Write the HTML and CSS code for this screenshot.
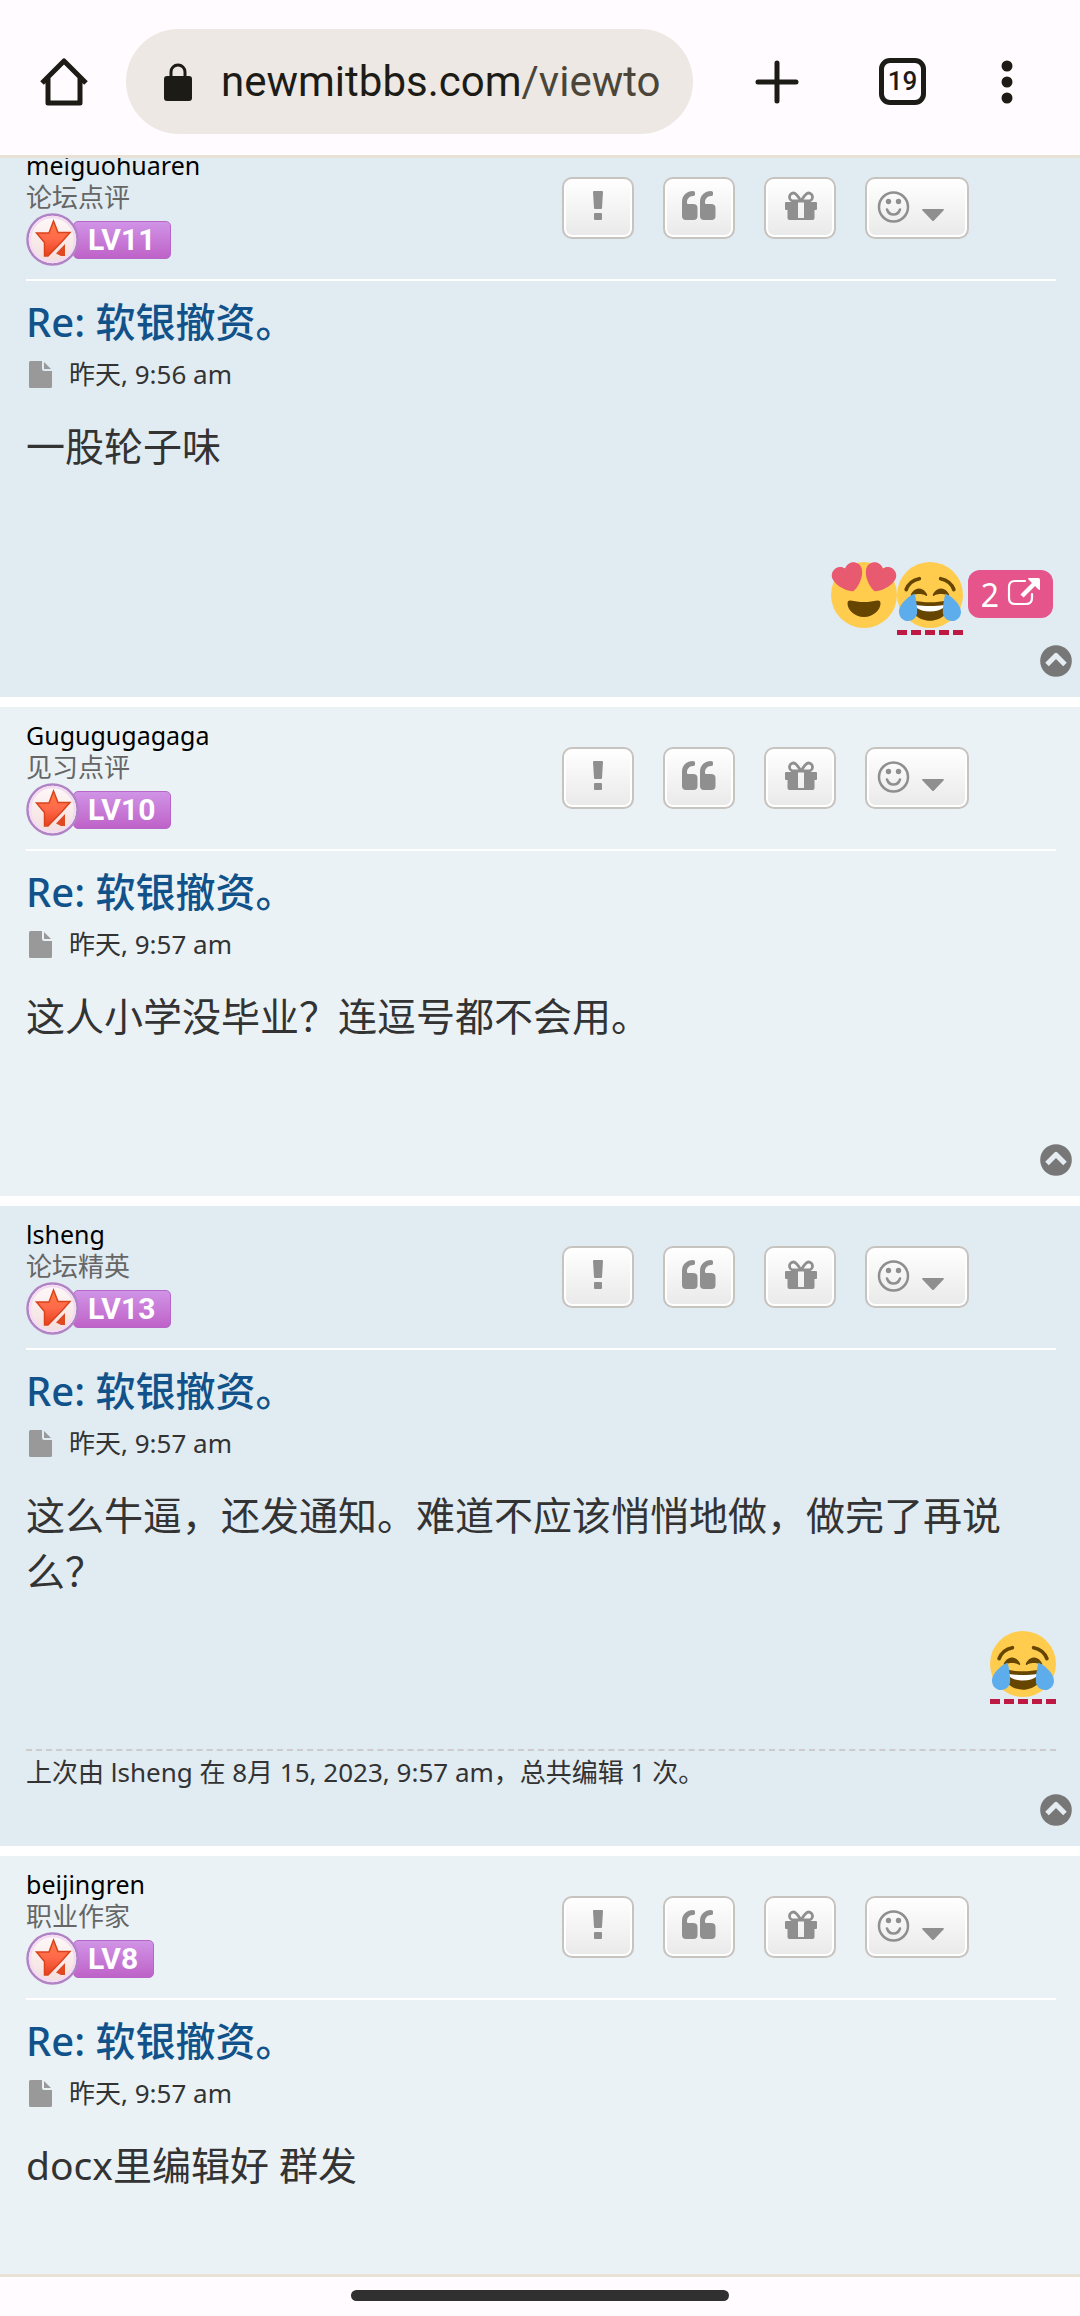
FILE: index.html
```html
<!DOCTYPE html>
<html lang="zh-CN">
<head>
  <meta charset="UTF-8">
  <meta name="viewport" content="width=device-width, initial-scale=1.0">
  <title>软银撤资。</title>
  <link rel="stylesheet" href="styles.css">
</head>
<body>
  <!-- shared icons -->
  <svg class="sprite" aria-hidden="true">
    <defs>
      <linearGradient id="star-fill" x1="0" y1="0" x2="0" y2="1">
        <stop offset="0" stop-color="#ff7a45"/>
        <stop offset=".5" stop-color="#ff6a4a"/>
        <stop offset="1" stop-color="#e8401c"/>
      </linearGradient>
      <linearGradient id="medal-fill" x1="0" y1="0" x2="0" y2="1">
        <stop offset="0" stop-color="#fffafa"/>
        <stop offset="1" stop-color="#f3dcdc"/>
      </linearGradient>
    </defs>
    <symbol id="i-medal" viewBox="0 0 53 53">
      <circle cx="26.5" cy="26.5" r="25" fill="url(#medal-fill)" stroke="#b083c4" stroke-width="2.5"/>
      <circle cx="26.5" cy="26.5" r="22.5" fill="none" stroke="#f3dcf2" stroke-width="2.5"/>
      <path d="M27.5 8l4.500 11.500H44l-8 9L22 43h-3.500V29.500L10.500 20h12.500z" fill="url(#star-fill)" stroke="#d9441c" stroke-width="1.500"/>
      <path d="M39 31v12h-4l-5-2.500z" fill="#e04a22"/>
    </symbol>
    <symbol id="i-report" viewBox="0 0 36 36">
      <path d="M13 3q0-1 1-1h8q1 0 1 1l-1 16q0 1-1 1h-6q-1 0-1-1zM14 25q0-1 1-1h6q1 0 1 1v5q0 1-1 1h-6q-1 0-1-1z"/>
    </symbol>
    <symbol id="i-quote" viewBox="0 0 36 36">
      <path d="M1 27V13C1 6 6 2 12 2q2 0 2 1.500v2Q14 7 12 7c-3.500 0-6 3-6 6v1q0 1 1 1h5q4.500 0 4.500 4v8q0 4-4 4H5q-4 0-4-4z"/>
      <path d="M19 27V13c0-7 5-11 11-11q2 0 2 1.500v2Q32 7 30 7c-3.500 0-6 3-6 6v1q0 1 1 1h5q4.500 0 4.500 4v8q0 4-4 4H23q-4 0-4-4z"/>
    </symbol>
    <symbol id="i-gift" viewBox="0 0 36 36">
      <path fill-rule="evenodd" d="M4 13h30q1 0 1 1v6q0 1-1 1h-1.500v8q0 2-2 2h-23q-2 0-2-2v-8H4q-1 0-1-1v-6q0-1 1-1zm12 0v16h6V13z"/>
      <path d="M19 12c-3-5-5-8-7.500-8a3.700 3.700 0 0 0 0 8zm0 0c3-5 5-8 7.500-8a3.700 3.700 0 0 1 0 8z" fill="none" stroke="currentColor" stroke-width="2.800"/>
    </symbol>
    <symbol id="i-smile" viewBox="0 0 36 36">
      <circle cx="17.500" cy="18" r="14.500" fill="none" stroke="currentColor" stroke-width="2.500"/>
      <circle cx="12.500" cy="12.500" r="2.700"/>
      <circle cx="22.500" cy="12.500" r="2.700"/>
      <path d="M11 20.500c1 3 3.500 5 6.500 5s5.500-2 6.500-5" fill="none" stroke="currentColor" stroke-width="2.500" stroke-linecap="round"/>
    </symbol>
    <symbol id="i-caret" viewBox="0 0 22 12">
      <path d="M1 0h20q1.500 0 .5 1.500L12 11.500q-1 1-2 0L.5 1.500Q-.5 0 1 0z"/>
    </symbol>
    <symbol id="i-file" viewBox="0 0 23 27">
      <path d="M1.500 0H13v8q0 2 2 2h8v15.500q0 1.500-1.500 1.500h-20Q0 27 0 25.500v-24Q0 0 1.500 0z"/>
      <path d="M15 1l7 7h-7z"/>
    </symbol>
    <symbol id="i-top" viewBox="0 0 32 32">
      <circle cx="16" cy="16" r="15.800" fill="#777"/>
      <path d="M7 19.500l9-9 9 9" fill="none" stroke="#e6edf2" stroke-width="5" stroke-linejoin="round"/>
    </symbol>
    <symbol id="i-link" viewBox="0 0 33 28">
      <path d="M18 3H8Q2 3 2 9v11q0 6 6 6h11q6 0 6-6v-4" fill="none" stroke="currentColor" stroke-width="2.200" stroke-linecap="round"/>
      <path d="M15 18L28 5" stroke="currentColor" stroke-width="4.500"/>
      <path d="M21 1q0-1 1-1h9.500Q33 0 33 1.500V11q0 1.500-1.500.5z"/>
    </symbol>
    <symbol id="e-hearts" viewBox="0 0 36 36">
      <circle cx="18" cy="18" r="18" fill="#ffcc4d"/>
      <path fill="#e75a70" d="M16.650 3.281C15.791.85 13.126-.426 10.694.431c-1.476.52-2.521 1.711-2.928 3.104-1.191-.829-2.751-1.100-4.225-.58C1.111 3.813-.167 6.480.692 8.911c.122.344.284.663.472.958 1.951 3.582 7.588 6.100 11.001 6.131 2.637-2.167 5.446-7.665 4.718-11.677-.038-.348-.113-.698-.233-1.042zm2.700 0C20.209.85 22.875-.426 25.306.431c1.476.52 2.521 1.711 2.929 3.104 1.191-.829 2.751-1.100 4.225-.58 2.430.858 3.707 3.525 2.850 5.956-.123.344-.284.663-.473.958-1.951 3.582-7.588 6.100-11.002 6.131-2.637-2.167-5.445-7.665-4.717-11.677.037-.348.112-.698.232-1.042z"/>
      <path fill="#664500" d="M18 21.849c-2.966 0-4.935-.346-7.369-.819-.557-.106-1.638 0-1.638 1.638 0 3.275 3.763 7.369 9.007 7.369s9.007-4.094 9.007-7.369c0-1.638-1.082-1.745-1.638-1.638-2.434.473-4.402.819-7.369.819"/>
    </symbol>
    <symbol id="e-joy" viewBox="0 0 36 36">
      <circle cx="18" cy="18" r="18" fill="#ffcc4d"/>
      <path fill="#664500" d="M28.457 17.797c-.06-.135-1.499-3.297-4.457-3.297-2.957 0-4.397 3.162-4.457 3.297-.092.207-.032.449.145.591.175.142.426.147.61.014.012-.009 1.262-.902 3.702-.902 2.426 0 3.674.881 3.702.901.088.066.194.099.298.099.11 0 .221-.037.312-.109.177-.142.238-.386.145-.594zm-12 0c-.06-.135-1.499-3.297-4.457-3.297-2.957 0-4.397 3.162-4.457 3.297-.092.207-.032.449.144.591.176.142.427.147.61.014.013-.009 1.262-.902 3.703-.902 2.426 0 3.674.881 3.702.901.089.066.195.099.298.099.11 0 .221-.037.312-.109.178-.142.237-.386.145-.594zM18 22c-3.623 0-6.027-.422-9-1-.679-.131-2 0-2 2 0 4 4.595 9 11 9 6.404 0 11-5 11-9 0-2-1.321-2.132-2-2-2.973.578-5.377 1-9 1z"/>
      <path fill="#fff" d="M9 23s3 1 9 1 9-1 9-1-2 4-9 4-9-4-9-4z"/>
      <path d="M5 15c1-2.600 3.600-5.200 7.200-5.900M31 15c-1-2.600-3.600-5.200-7.200-5.900" fill="none" stroke="#664500" stroke-width="2" stroke-linecap="round"/>
      <path fill="#5dadec" d="M9.600 17.300c-2 .4-8.500 5.300-8.500 9.800 0 3 2.300 5.100 5 5.100s4.900-2 4.900-5c0-3-.6-7-1.400-9.900zM26.400 17.300c2 .4 8.500 5.300 8.500 9.800 0 3-2.300 5.100-5 5.100s-4.900-2-4.900-5c0-3 .6-7 1.400-9.900z"/>
    </symbol>
  </svg>

  <header class="toolbar">
    <button class="tool" aria-label="主页">
      <svg width="48" height="48" viewBox="0 0 48 48"><path d="M2 25L24 3l22 22M8 20v25h32V20" fill="none" stroke="currentColor" stroke-width="5" stroke-linejoin="round"/></svg>
    </button>
    <button class="address">
      <svg width="30" height="38" viewBox="0 0 30 38"><path d="M8 15V9a7 7 0 0 1 14 0v6" fill="none" stroke="currentColor" stroke-width="3"/><rect x="1" y="13" width="28" height="25" rx="3"/></svg>
      <span>newmitbbs.com<span class="path">/viewto</span></span>
    </button>
    <div class="tools">
      <button class="tool" aria-label="新标签页">
        <svg width="44" height="44" viewBox="0 0 44 44"><path d="M22 3v38M3 22h38" stroke="currentColor" stroke-width="5" stroke-linecap="round"/></svg>
      </button>
      <button class="tool tabs" aria-label="19 个标签页">19</button>
      <button class="tool" aria-label="菜单">
        <svg width="16" height="48" viewBox="0 0 16 48"><circle cx="8" cy="8" r="5.500"/><circle cx="8" cy="24" r="5.500"/><circle cx="8" cy="40" r="5.500"/></svg>
      </button>
    </div>
  </header>

  <main class="topic">
    <article class="post bg2">
      <div class="post-head">
        <div class="profile">
          <a class="username" href="#">meiguohuaren</a>
          <span class="rank">论坛点评</span>
          <div class="level"><svg><use href="#i-medal"/></svg><span>LV11</span></div>
        </div>
        <div class="post-buttons">
          <button aria-label="举报"><svg><use href="#i-report"/></svg></button>
          <button aria-label="引用"><svg><use href="#i-quote"/></svg></button>
          <button aria-label="打赏"><svg><use href="#i-gift"/></svg></button>
          <button class="react" aria-label="表情"><svg><use href="#i-smile"/></svg><svg class="caret"><use href="#i-caret"/></svg></button>
        </div>
      </div>
      <h3><a href="#">Re: 软银撤资。</a></h3>
      <p class="date"><svg><use href="#i-file"/></svg><span>昨天, 9:56 am</span></p>
      <div class="content">一股轮子味</div>
      <div class="reactions">
        <svg class="emoji"><use href="#e-hearts"/></svg>
        <svg class="emoji mine"><use href="#e-joy"/></svg>
        <a class="count" href="#">2 <svg><use href="#i-link"/></svg></a>
      </div>
      <a class="top" href="#" aria-label="页首"><svg><use href="#i-top"/></svg></a>
    </article>

    <article class="post bg1">
      <div class="post-head">
        <div class="profile">
          <a class="username" href="#">Gugugugagaga</a>
          <span class="rank">见习点评</span>
          <div class="level"><svg><use href="#i-medal"/></svg><span>LV10</span></div>
        </div>
        <div class="post-buttons">
          <button aria-label="举报"><svg><use href="#i-report"/></svg></button>
          <button aria-label="引用"><svg><use href="#i-quote"/></svg></button>
          <button aria-label="打赏"><svg><use href="#i-gift"/></svg></button>
          <button class="react" aria-label="表情"><svg><use href="#i-smile"/></svg><svg class="caret"><use href="#i-caret"/></svg></button>
        </div>
      </div>
      <h3><a href="#">Re: 软银撤资。</a></h3>
      <p class="date"><svg><use href="#i-file"/></svg><span>昨天, 9:57 am</span></p>
      <div class="content">这人小学没毕业？连逗号都不会用。</div>
      <a class="top" href="#" aria-label="页首"><svg><use href="#i-top"/></svg></a>
    </article>

    <article class="post bg2">
      <div class="post-head">
        <div class="profile">
          <a class="username" href="#">lsheng</a>
          <span class="rank">论坛精英</span>
          <div class="level"><svg><use href="#i-medal"/></svg><span>LV13</span></div>
        </div>
        <div class="post-buttons">
          <button aria-label="举报"><svg><use href="#i-report"/></svg></button>
          <button aria-label="引用"><svg><use href="#i-quote"/></svg></button>
          <button aria-label="打赏"><svg><use href="#i-gift"/></svg></button>
          <button class="react" aria-label="表情"><svg><use href="#i-smile"/></svg><svg class="caret"><use href="#i-caret"/></svg></button>
        </div>
      </div>
      <h3><a href="#">Re: 软银撤资。</a></h3>
      <p class="date"><svg><use href="#i-file"/></svg><span>昨天, 9:57 am</span></p>
      <div class="content">这么牛逼，还发通知。难道不应该悄悄地做，做完了再说么？</div>
      <div class="reactions">
        <svg class="emoji mine"><use href="#e-joy"/></svg>
      </div>
      <div class="notice">上次由 lsheng 在 8月 15, 2023, 9:57 am，总共编辑 1 次。</div>
      <a class="top" href="#" aria-label="页首"><svg><use href="#i-top"/></svg></a>
    </article>

    <article class="post bg1">
      <div class="post-head">
        <div class="profile">
          <a class="username" href="#">beijingren</a>
          <span class="rank">职业作家</span>
          <div class="level"><svg><use href="#i-medal"/></svg><span>LV8</span></div>
        </div>
        <div class="post-buttons">
          <button aria-label="举报"><svg><use href="#i-report"/></svg></button>
          <button aria-label="引用"><svg><use href="#i-quote"/></svg></button>
          <button aria-label="打赏"><svg><use href="#i-gift"/></svg></button>
          <button class="react" aria-label="表情"><svg><use href="#i-smile"/></svg><svg class="caret"><use href="#i-caret"/></svg></button>
        </div>
      </div>
      <h3><a href="#">Re: 软银撤资。</a></h3>
      <p class="date"><svg><use href="#i-file"/></svg><span>昨天, 9:57 am</span></p>
      <div class="content">docx里编辑好 群发</div>
    </article>
  </main>

  <footer class="gesture"><div class="handle"></div></footer>
</body>
</html>
```

FILE: styles.css
```css
:root {
  --chrome: #fffbff;
  --chrome-line: #e7e2d5;
  --ink: #1d1b16;
  --icon: #8f8f8f;
}
* { box-sizing: border-box; margin: 0; padding: 0; }
body {
  height: 100vh;
  display: flex;
  flex-direction: column;
  background: #fff;
  color: #333;
  font-family: "Noto Sans", "Noto Sans CJK SC", sans-serif;
  font-size: 26px;
}
a { color: inherit; text-decoration: none; }
button { font: inherit; color: inherit; border: none; background: none; cursor: pointer; }
svg { display: block; flex: none; fill: currentColor; }
.sprite { position: absolute; width: 0; height: 0; }

/* browser bar */
.toolbar {
  display: flex;
  align-items: center;
  flex: none;
  padding: 29px 65px 21px 40px;
  background: var(--chrome);
  border-bottom: 3px solid var(--chrome-line);
  color: var(--ink);
}
.address {
  flex: 1;
  min-width: 0;
  height: 105px;
  margin: 0 62px 0 38px;
  padding: 0 24px 0 37px;
  display: flex;
  align-items: center;
  gap: 28px;
  border-radius: 53px;
  background: #ede8e3;
  font-family: Roboto, sans-serif;
  font-size: 42px;
  white-space: nowrap;
  overflow: hidden;
}
.address .path { color: #4b4639; }
.tools { display: flex; align-items: center; }
.tabs {
  width: 47px;
  height: 47px;
  margin: 0 73px 0 80px;
  border: 5px solid;
  border-radius: 11px;
  font-family: Roboto, sans-serif;
  font-size: 26px;
  font-weight: 500;
  line-height: 37px;
}

/* posts */
.topic {
  flex: 1;
  min-height: 0;
  overflow-y: auto;
  scrollbar-width: none;
  display: flex;
  flex-direction: column;
  gap: 10px;
}
.post {
  flex: none;
  display: flex;
  flex-direction: column;
  padding: 12px 24px 20px 26px;
}
.post:first-child { margin-top: -21px; }
.bg1 { background: #eaf2f6; }
.bg2 { background: #e1ebf2; }

.post-head {
  display: flex;
  justify-content: space-between;
  align-items: flex-start;
  padding-bottom: 13px;
  border-bottom: 2px solid #fff;
}
.profile { display: flex; flex-direction: column; line-height: 32px; }
.username { color: #000; font-size: 25px; }
.rank { color: #666; }
.level { display: flex; align-items: center; }
.level svg { width: 53px; height: 53px; z-index: 1; }
.level span {
  height: 38px;
  margin-left: -6px;
  padding: 0 15px 0 14px;
  border: 1px solid #b566c8;
  border-radius: 5px;
  background: linear-gradient(#d094e6, #bf62c8);
  color: #fff;
  font-family: Roboto, sans-serif;
  font-size: 30px;
  font-weight: 700;
  line-height: 36px;
}

.post-buttons { display: flex; gap: 29px; margin: 28px 87px 0 0; }
.post-buttons button {
  display: flex;
  justify-content: center;
  width: 72px;
  height: 62px;
  padding-top: 10px;
  border: 2px solid #c7c3bf;
  border-radius: 10px;
  background: linear-gradient(#fff, #e9e9e9);
  box-shadow: inset 0 0 0 2px #fff;
  color: var(--icon);
}
.post-buttons svg { width: 36px; height: 36px; }
.post-buttons .react { width: 104px; gap: 10px; padding-right: 14px; }
.post-buttons .caret { width: 22px; height: 12px; margin-top: 20px; }

h3 {
  margin: 16px 0 10px;
  font-size: 40px;
  font-weight: 500;
  line-height: 50px;
  color: #105289;
}
.date { display: flex; align-items: center; line-height: 34px; padding-left: 3px; gap: 17px; }
.date svg { width: 23px; height: 27px; color: #999; }
.content {
  min-height: 144px;
  margin-top: 27px;
  padding-bottom: 32px;
  font-size: 39px;
  line-height: 56px;
}
.reactions { display: flex; justify-content: flex-end; align-items: flex-start; height: 74px; }
.emoji { width: 66px; height: 66px; }
.mine {
  height: 73px;
  padding-bottom: 2px;
  border-bottom: 5px dashed #be1942;
}
.count {
  display: flex;
  align-items: center;
  gap: 8px;
  height: 48px;
  margin: 8px 3px 0 5px;
  padding: 0 13px;
  border-radius: 12px;
  background: #e5548a;
  color: #fff;
  font-size: 32px;
}
.count svg { width: 33px; height: 28px; margin-bottom: 4px; }
.notice {
  margin-top: 44px;
  padding-top: 4px;
  border-top: 2px dashed #ccc;
  line-height: 34px;
}
.top { align-self: flex-end; margin: auto -16px 0 0; padding-top: 12px; }
.reactions ~ .top { padding-top: 9px; }
.notice ~ .top { padding-top: 5px; }
.top svg { width: 32px; height: 32px; }

/* gesture bar */
.gesture {
  flex: none;
  padding: 13px 0 15px;
  background: var(--chrome);
  border-top: 3px solid var(--chrome-line);
}
.handle {
  width: 35%;
  height: 11px;
  margin: 0 auto;
  border-radius: 6px;
  background: #303030;
}
```
